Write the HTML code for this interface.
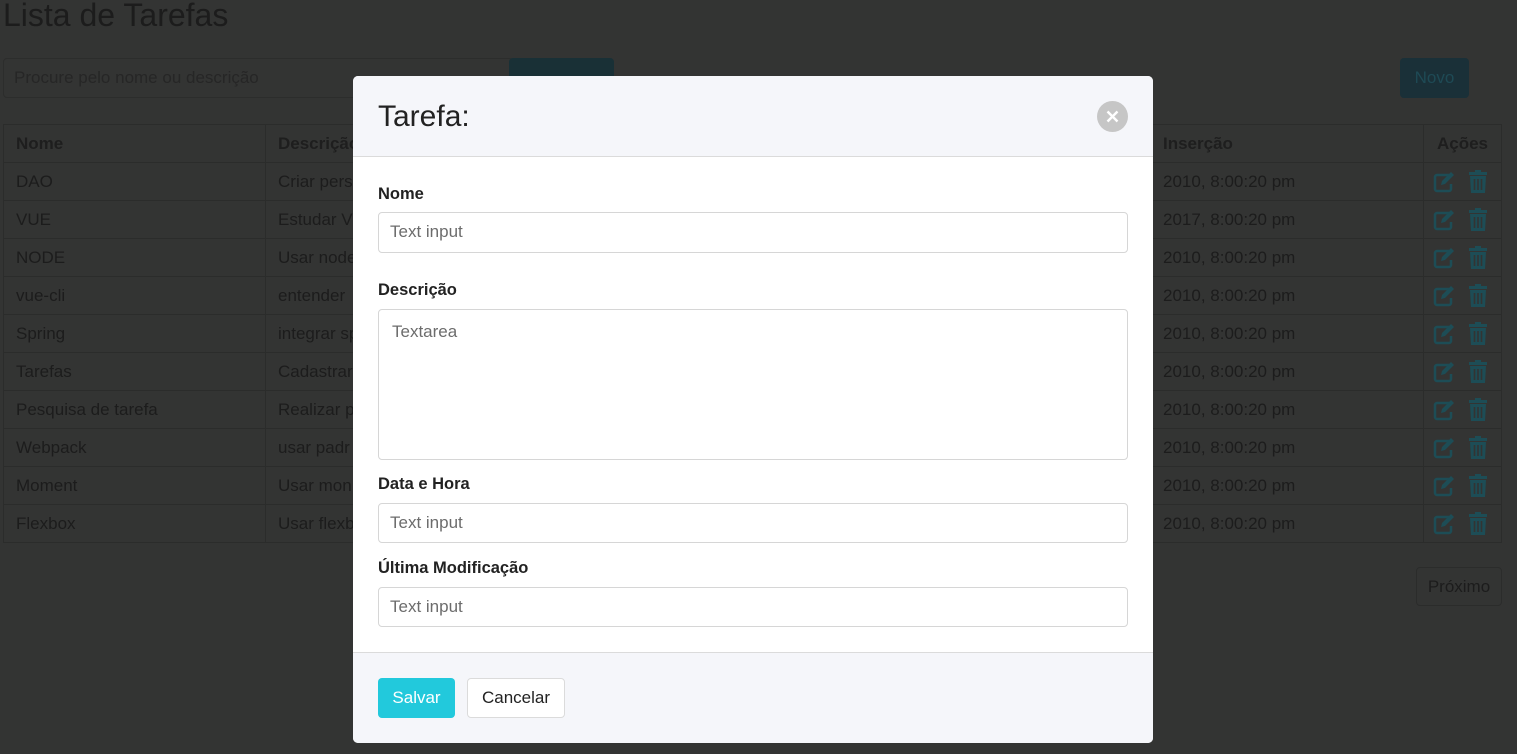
<!DOCTYPE html>
<html><head><meta charset="utf-8"><style>
*{box-sizing:border-box}
body{margin:0;width:1517px;height:754px;overflow:hidden;background:#333433;font-family:"Liberation Sans",sans-serif;color:#1c1c1c;position:relative}
.abs{position:absolute}
h1{position:absolute;left:3px;top:-3px;margin:0;font-weight:400;font-size:32px;color:#1c1c1c}
.search{left:3px;top:58px;width:510px;height:40px;border:1px solid #2c2d2c;border-radius:4px;padding:9px 10px;font-size:17px;color:#262626}
.pesq{left:509px;top:58px;width:105px;height:40px;background:#193036;border-radius:4px}
.novo{left:1400px;top:58px;width:69px;height:40px;background:#1a3038;border-radius:4px;color:#1e4a55;font-size:17px;text-align:center;line-height:40px}
table{position:absolute;left:3px;top:124px;border-collapse:collapse;width:1499px;font-size:17px}
td,th{border:1px solid #2b2c2b;height:38px;padding:0 12px;text-align:left}
th{font-weight:700;color:#1e1e1e}
td.a{padding:0 0 0 8px}
.ic{display:inline-block;vertical-align:middle}
.prox{left:1416px;top:567px;width:86px;height:39px;border:1px solid #2b2c2b;border-radius:4px;text-align:center;line-height:38px;font-size:17px;color:#1c1c1c}
.modal{left:353px;top:76px;width:800px;height:667px;background:#fff;border-radius:5px;overflow:hidden}
.mh{height:81px;background:#f5f6fa;border-bottom:1px solid #dbdbdb;position:relative}
.mh span{position:absolute;left:25px;top:24px;font-size:30px;color:#222}
.close{position:absolute;left:744px;top:25px;width:31px;height:31px;border-radius:50%;background:#c6c6c6}
.lbl{position:absolute;left:25px;font-weight:700;font-size:16.5px;color:#222}
.inp{position:absolute;left:25px;width:750px;border:1px solid #d6d6d6;border-radius:4px;font-size:17px;color:#6c6c6c;padding:9px 11px}
.mf{position:absolute;left:0;top:576px;width:800px;height:91px;background:#f5f6fa;border-top:1px solid #dbdbdb}
.btn{position:absolute;top:25px;height:40px;border-radius:4px;font-size:17px;line-height:40px;text-align:center}
</style></head><body>
<svg width="0" height="0" style="position:absolute"><defs>
<g id="ed"><path d="M17 4H5a2 2 0 0 0-2 2v12a2 2 0 0 0 2 2h12a2 2 0 0 0 2-2v-5" fill="none" stroke="#1d4d56" stroke-width="2.5"/><path d="M9 14l1-4 9-9 3 3-9 9z" fill="#1d4d56"/></g>
<g id="tr"><path d="M7 0h6v2h6v3H1V2h6z" fill="#1d4d56"/><path d="M2 6h16l-1 17H3z" fill="#1d4d56"/><path d="M6.5 9v11M10 9v11M13.5 9v11" stroke="#333433" stroke-width="1.6"/></g>
</defs></svg>
<h1>Lista de Tarefas</h1>
<div class="abs search">Procure pelo nome ou descrição</div>
<div class="abs pesq"></div>
<div class="abs novo">Novo</div>
<table>
<tr><th style="width:262px">Nome</th><th style="width:885px">Descrição</th><th style="width:273px">Inserção</th><th style="text-align:center">Ações</th></tr>
<tr><td>DAO</td><td>Criar pers</td><td>2010, 8:00:20 pm</td><td class="a"><svg class="ic" width="26" height="22"><use href="#ed"/></svg><svg class="ic" style="margin-left:10px" width="20" height="24"><use href="#tr"/></svg></td></tr>
<tr><td>VUE</td><td>Estudar V</td><td>2017, 8:00:20 pm</td><td class="a"><svg class="ic" width="26" height="22"><use href="#ed"/></svg><svg class="ic" style="margin-left:10px" width="20" height="24"><use href="#tr"/></svg></td></tr>
<tr><td>NODE</td><td>Usar node</td><td>2010, 8:00:20 pm</td><td class="a"><svg class="ic" width="26" height="22"><use href="#ed"/></svg><svg class="ic" style="margin-left:10px" width="20" height="24"><use href="#tr"/></svg></td></tr>
<tr><td>vue-cli</td><td>entender</td><td>2010, 8:00:20 pm</td><td class="a"><svg class="ic" width="26" height="22"><use href="#ed"/></svg><svg class="ic" style="margin-left:10px" width="20" height="24"><use href="#tr"/></svg></td></tr>
<tr><td>Spring</td><td>integrar sp</td><td>2010, 8:00:20 pm</td><td class="a"><svg class="ic" width="26" height="22"><use href="#ed"/></svg><svg class="ic" style="margin-left:10px" width="20" height="24"><use href="#tr"/></svg></td></tr>
<tr><td>Tarefas</td><td>Cadastrar</td><td>2010, 8:00:20 pm</td><td class="a"><svg class="ic" width="26" height="22"><use href="#ed"/></svg><svg class="ic" style="margin-left:10px" width="20" height="24"><use href="#tr"/></svg></td></tr>
<tr><td>Pesquisa de tarefa</td><td>Realizar p</td><td>2010, 8:00:20 pm</td><td class="a"><svg class="ic" width="26" height="22"><use href="#ed"/></svg><svg class="ic" style="margin-left:10px" width="20" height="24"><use href="#tr"/></svg></td></tr>
<tr><td>Webpack</td><td>usar padr</td><td>2010, 8:00:20 pm</td><td class="a"><svg class="ic" width="26" height="22"><use href="#ed"/></svg><svg class="ic" style="margin-left:10px" width="20" height="24"><use href="#tr"/></svg></td></tr>
<tr><td>Moment</td><td>Usar mon</td><td>2010, 8:00:20 pm</td><td class="a"><svg class="ic" width="26" height="22"><use href="#ed"/></svg><svg class="ic" style="margin-left:10px" width="20" height="24"><use href="#tr"/></svg></td></tr>
<tr><td>Flexbox</td><td>Usar flexb</td><td>2010, 8:00:20 pm</td><td class="a"><svg class="ic" width="26" height="22"><use href="#ed"/></svg><svg class="ic" style="margin-left:10px" width="20" height="24"><use href="#tr"/></svg></td></tr>
</table>
<div class="abs prox">Próximo</div>
<div class="abs modal">
<div class="mh"><span>Tarefa:</span><div class="close"><svg width="31" height="31"><path d="M10.5 10.5L20.5 20.5M20.5 10.5L10.5 20.5" stroke="#fff" stroke-width="2.4"/></svg></div></div>
<div class="lbl" style="top:109px">Nome</div>
<div class="inp" style="top:136px;height:41px">Text input</div>
<div class="lbl" style="top:205px">Descrição</div>
<div class="inp" style="top:233px;height:151px;padding-left:13px;padding-top:12px">Textarea</div>
<div class="lbl" style="top:399px">Data e Hora</div>
<div class="inp" style="top:427px;height:40px">Text input</div>
<div class="lbl" style="top:483px">Última Modificação</div>
<div class="inp" style="top:511px;height:40px">Text input</div>
<div class="mf">
<div class="btn" style="left:25px;width:77px;background:#22c9dc;color:#fff">Salvar</div>
<div class="btn" style="left:114px;width:98px;border:1px solid #dbdbdb;background:#fff;color:#222;line-height:38px">Cancelar</div>
</div>
</div>
</body></html>
